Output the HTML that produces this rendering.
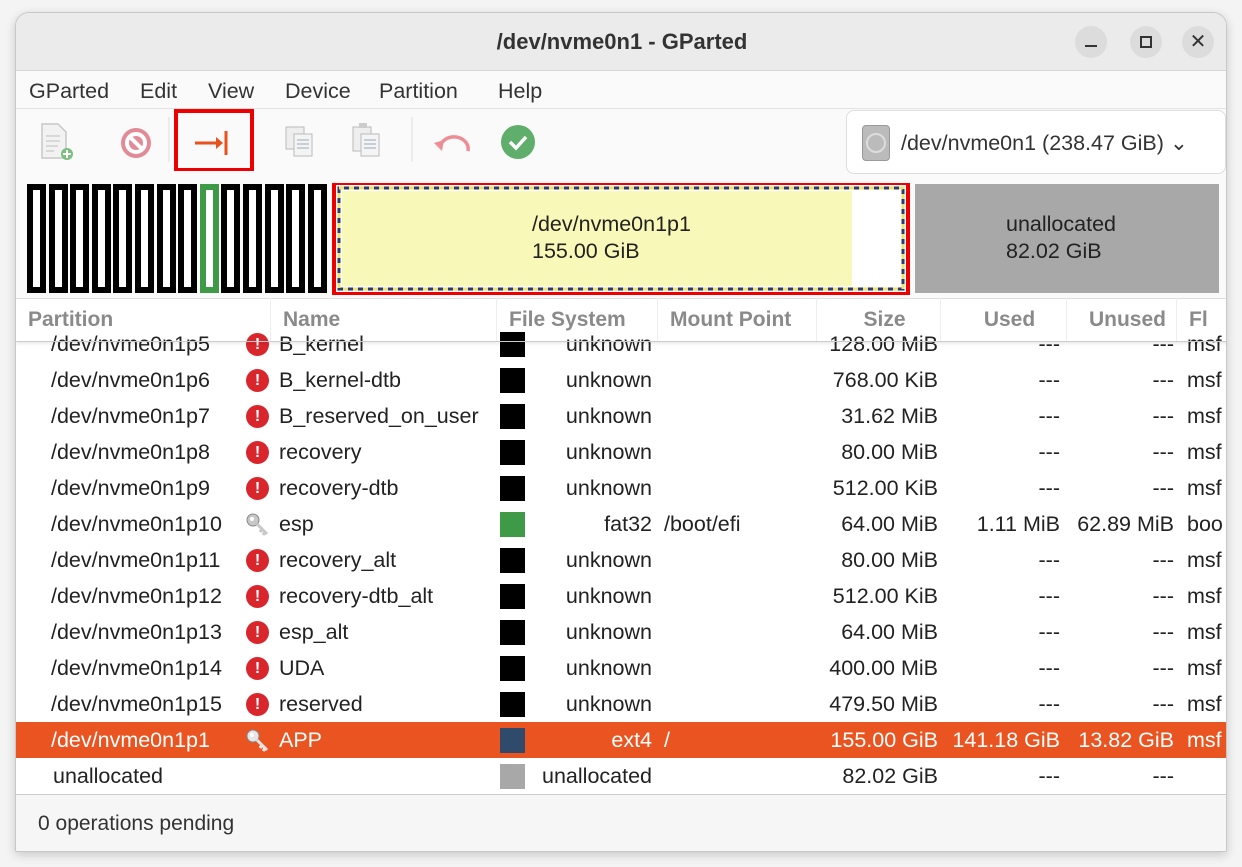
<!DOCTYPE html>
<html><head><meta charset="utf-8"><style>
*{margin:0;padding:0;box-sizing:border-box}
body{width:1242px;height:867px;background:#f4f4f4;font-family:"Liberation Sans",sans-serif;position:relative;overflow:hidden;color:#222}
.win{position:absolute;left:15px;top:12px;width:1212px;height:840px;background:#fafafa;border:1px solid #c8c8c8;border-radius:14px 14px 2px 2px;overflow:hidden;box-shadow:0 3px 10px rgba(0,0,0,.18)}
.a{position:absolute;white-space:nowrap}
.title{left:0;top:0;width:1212px;height:58px;background:#ebebeb;border-bottom:1px solid #d5d5d5}
.wb{position:absolute;top:13px;width:32px;height:32px;border-radius:16px;background:#dcdcdc}
.row{position:absolute;left:0;width:1210px;height:36px;font-size:21.5px;line-height:36px}
.row span{position:absolute;white-space:nowrap}
.r{text-align:right}
.sq{position:absolute;left:484px;top:6px;width:25px;height:25px;background:#000}
.ex{position:absolute;left:230px;top:7px;width:23px;height:23px;border-radius:12px;background:#d9262c;color:#fff;font-size:16px;line-height:23px;text-align:center;font-weight:bold}
.hd{position:absolute;top:285px;height:44px;font-size:21px;color:#8a8a8a;line-height:44px;font-weight:bold;border-right:1px solid #eee;padding-left:12px}
.m{position:absolute;top:56px;font-size:21.5px;line-height:44px;color:#333}
</style></head><body>
<div class="win">
 <div class="a title"></div>
 <div class="a" style="left:0;width:1212px;top:16px;text-align:center;font-size:22px;font-weight:bold;color:#333">/dev/nvme0n1 - GParted</div>
 <div class="wb" style="left:1059px"><div style="position:absolute;left:10px;top:19px;width:12px;height:2px;background:#333"></div></div>
 <div class="wb" style="left:1114px"><div style="position:absolute;left:10px;top:10px;width:12px;height:12px;border:2px solid #333"></div></div>
 <div class="wb" style="left:1166px;font-size:20px;line-height:32px;text-align:center;color:#333">✕</div>
 <div class="a" style="left:0;top:58px;width:1212px;height:38px;background:#fafafa;border-bottom:1px solid #e2e2e2"></div>
 <div class="m" style="left:13px">GParted</div>
 <div class="m" style="left:124px">Edit</div>
 <div class="m" style="left:192px">View</div>
 <div class="m" style="left:269px">Device</div>
 <div class="m" style="left:363px">Partition</div>
 <div class="m" style="left:482px">Help</div>
 <svg class="a" style="left:20px;top:96px" width="530" height="62">
  <path d="M6 15h16l8 8v26H6z" fill="#f2f2f2" stroke="#c8c8c8" stroke-width="1.5"/>
  <path d="M10 27h14M10 32h14M10 37h12M10 42h8" stroke="#d0d0d0" stroke-width="1.5"/>
  <circle cx="31" cy="45" r="6" fill="#7bbf7f"/><path d="M31 41v8M27 45h8" stroke="#fff" stroke-width="2"/>
  <circle cx="100" cy="34" r="15" fill="#e28a96"/><circle cx="100" cy="34" r="9" fill="none" stroke="#fff" stroke-width="4"/><path d="M93 27l14 14" stroke="#fff" stroke-width="4"/>
  <path d="M133 8v45" stroke="#ddd"/>
  <rect x="140" y="2" width="76" height="59" fill="none" stroke="#e00" stroke-width="4"/>
  <path d="M159 34h25" stroke="#e8521f" stroke-width="3"/><path d="M180 28l7 6-7 6z" fill="#e8521f"/><path d="M190 22v24" stroke="#e8521f" stroke-width="3"/>
  <rect x="250" y="18" width="18" height="22" fill="#eee" stroke="#bbb"/><rect x="258" y="25" width="18" height="22" fill="#f4f4f4" stroke="#bbb"/><path d="M261 31h12M261 35h12M261 39h12" stroke="#9ab"/>
  <rect x="317" y="18" width="18" height="24" fill="#eee" stroke="#bbb"/><rect x="323" y="14" width="8" height="5" fill="#ccc"/><rect x="325" y="25" width="18" height="22" fill="#f4f4f4" stroke="#bbb"/><path d="M328 31h12M328 35h12M328 39h12" stroke="#9ab"/>
  <path d="M376 8v45" stroke="#ddd"/>
  <path d="M404 38a14 12 0 0 1 28 4" fill="none" stroke="#ee8d94" stroke-width="3.5"/><path d="M398 34l10-3-2 11z" fill="#ee8d94"/>
  <circle cx="482" cy="33" r="17" fill="#5fae6b"/><path d="M474 33l6 6 10-11" fill="none" stroke="#fff" stroke-width="3.5"/>
 </svg>
 <div class="a" style="left:830px;top:97px;width:380px;height:64px;background:#fff;border:1px solid #ddd;border-radius:8px"></div>
 <div class="a" style="left:846px;top:112px;width:28px;height:36px;background:#bbb;border:1px solid #999;border-radius:4px"><div style="position:absolute;left:3px;top:7px;width:20px;height:20px;border-radius:10px;border:2px solid #ddd"></div></div>
 <div class="a" style="left:885px;top:112px;font-size:21.5px;line-height:36px;color:#333">/dev/nvme0n1 (238.47 GiB) ⌄</div>
 <svg class="a" style="left:8px;top:170px" width="1200" height="112">
  <rect x="310" y="0" width="574" height="111" fill="none" stroke="#e00" stroke-width="4"/>
  <rect x="315" y="5" width="564" height="101" fill="#fff" stroke="#2b3b6b" stroke-width="3"/>
  <rect x="315" y="5" width="564" height="101" fill="none" stroke="#f0e070" stroke-width="3" stroke-dasharray="5 5"/>
  <rect x="318" y="8" width="510" height="95" fill="#f8f8b8"/>
  <rect x="891" y="1" width="304" height="109" fill="#a8a8a8"/>
 </svg>
 <div class="a" style="left:329px;top:198px;width:490px;font-size:21.5px;line-height:27px;padding-left:187px">/dev/nvme0n1p1<br>155.00 GiB</div>
 <div class="a" style="left:990px;top:198px;font-size:21.5px;line-height:27px">unallocated<br>82.02 GiB</div>
 <div id="stripes"></div>
 <div class="a" style="left:0;top:285px;width:1212px;height:496px;background:#fff;border-top:1px solid #ddd"></div>
 <div class="hd" style="left:0;width:255px">Partition</div>
 <div class="hd" style="left:255px;width:226px">Name</div>
 <div class="hd" style="left:481px;width:161px">File System</div>
 <div class="hd" style="left:642px;width:159px">Mount Point</div>
 <div class="hd" style="left:801px;width:124px;text-align:center">Size</div>
 <div class="hd" style="left:925px;width:126px;text-align:center">Used</div>
 <div class="hd" style="left:1051px;width:110px;text-align:center">Unused</div>
 <div class="hd" style="left:1161px;width:60px">Fl</div>
 <div id="rows"></div>
 <div class="a" style="left:0;top:285px;width:1212px;height:44px;border-bottom:1px solid #ccc;box-shadow:0 2px 3px rgba(0,0,0,.08)"></div>
 <div class="a" style="left:0;top:781px;width:1212px;height:60px;background:#f6f6f6;border-top:1px solid #ccc"></div>
 <div class="a" style="left:22px;top:796px;font-size:21px;line-height:30px;color:#333">0 operations pending</div>
</div>
<script>
var st='';for(var i=0;i<14;i++){var x=8+1+i*21.6;var c=(i==8?'#3f9a47':'#000');st+='<div class="a" style="left:'+(x+2)+'px;top:171px;width:19px;height:109px;border:6px solid '+c+';background:#fff"></div>';}
document.getElementById('stripes').innerHTML=st;
var key=function(c){return '<svg style="position:absolute;left:229px;top:6px" width="26" height="24"><circle cx="8" cy="8" r="6" fill="'+c+'" stroke="#888" stroke-width="1"/><circle cx="7" cy="7" r="2" fill="#fff"/><path d="M12 12l10 10M17 17l-2 3M20 20l-2 3" stroke="'+c+'" stroke-width="3"/></svg>';};
var d=[["p5","B_kernel","unknown","","128.00 MiB","---","---","msf",1],["p6","B_kernel-dtb","unknown","","768.00 KiB","---","---","msf",1],["p7","B_reserved_on_user","unknown","","31.62 MiB","---","---","msf",1],["p8","recovery","unknown","","80.00 MiB","---","---","msf",1],["p9","recovery-dtb","unknown","","512.00 KiB","---","---","msf",1],["p10","esp","fat32","/boot/efi","64.00 MiB","1.11 MiB","62.89 MiB","boo",2],["p11","recovery_alt","unknown","","80.00 MiB","---","---","msf",1],["p12","recovery-dtb_alt","unknown","","512.00 KiB","---","---","msf",1],["p13","esp_alt","unknown","","64.00 MiB","---","---","msf",1],["p14","UDA","unknown","","400.00 MiB","---","---","msf",1],["p15","reserved","unknown","","479.50 MiB","---","---","msf",1],["p1","APP","ext4","/","155.00 GiB","141.18 GiB","13.82 GiB","msf",3],["u","","unallocated","","82.02 GiB","---","---","",0]];
var h='';d.forEach(function(r,i){var top=313+i*36;var sel=r[8]==3;var col=sel?'#fff':'#222';
var bg=sel?'background:#e95420;':'';var sq=r[8]==2?'#3f9a47':(sel?'#2f4a6a':(r[8]==0?'#a8a8a8':'#000'));
h+='<div class="row" style="top:'+top+'px;'+bg+'color:'+col+'">';
h+='<span style="left:'+(r[8]==0?37:35)+'px">'+(r[0]=='u'?'unallocated':'/dev/nvme0n1'+r[0])+'</span>';
if(r[8]==1)h+='<div class="ex">!</div>';if(r[8]>=2)h+=key(sel?'#e6e6e6':'#c8c8c8');
h+='<span style="left:263px">'+r[1]+'</span><div class="sq" style="background:'+sq+'"></div>';
h+='<span class="r" style="left:'+(r[8]==0?510:520)+'px;width:'+(r[8]==0?126:116)+'px">'+r[2]+'</span>';
h+='<span style="left:648px">'+r[3]+'</span><span class="r" style="left:780px;width:142px">'+r[4]+'</span>';
h+='<span class="r" style="left:930px;width:114px">'+r[5]+'</span><span class="r" style="left:1050px;width:108px">'+r[6]+'</span><span style="left:1171px">'+r[7]+'</span></div>';});
document.getElementById('rows').innerHTML=h;
</script>
</body></html>
